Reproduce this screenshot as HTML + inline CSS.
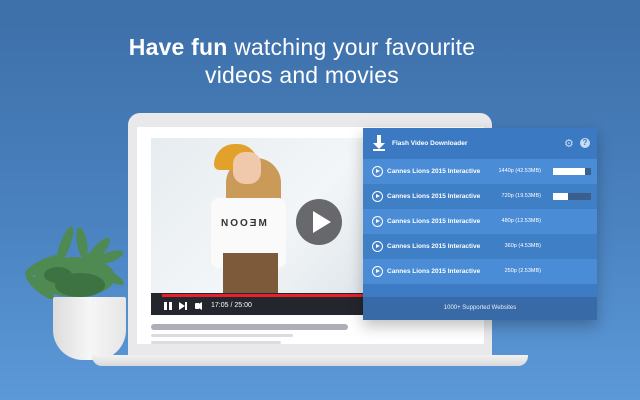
<!DOCTYPE html>
<html><head><style>
*{margin:0;padding:0;box-sizing:border-box}
body{width:640px;height:400px;overflow:hidden;position:relative;font-family:"Liberation Sans",sans-serif;background:linear-gradient(180deg,#3d6fa8 0%,#4a82c0 55%,#5c99d8 100%)}
.abs{position:absolute}
h1{position:absolute;left:0;top:33px;width:604px;text-align:center;color:#fff;font-weight:normal;font-size:23px;line-height:28px;letter-spacing:0.2px}
h1 b{font-weight:bold}
.row{position:absolute;left:0;width:234px;height:25px;color:#fff;font-size:6.5px;font-weight:bold}
.row .t{position:absolute;left:24px;top:9px}
.row .q{position:absolute;left:120px;width:58px;text-align:right;top:9px;font-weight:normal;font-size:5.5px}
.row .ic{position:absolute;left:9px;top:7px;width:11px;height:11px;border:1.5px solid #fff;border-radius:50%}
.row .ic:after{content:"";position:absolute;left:3px;top:1.5px;border-left:4px solid #fff;border-top:2.5px solid transparent;border-bottom:2.5px solid transparent}
.bar{position:absolute;left:190px;top:9px;width:38px;height:7px;background:#3a5f8e}
.bar i{position:absolute;left:0;top:0;height:7px;background:#fff;border:1px solid #fff}
</style></head><body>
<h1><b>Have fun</b> watching your favourite<br>videos and movies</h1>

<!-- plant -->
<svg class="abs" style="left:10px;top:215px" width="120" height="90" viewBox="0 0 120 90">
<g fill="#4f8a52">
<ellipse cx="65" cy="62" rx="40" ry="20"/>
<ellipse cx="35" cy="50" rx="22" ry="6" transform="rotate(-25 35 50)"/>
<ellipse cx="85" cy="40" rx="22" ry="6" transform="rotate(-50 85 40)"/>
<ellipse cx="55" cy="30" rx="20" ry="5" transform="rotate(-70 55 30)"/>
<ellipse cx="30" cy="72" rx="18" ry="5" transform="rotate(40 30 72)"/>
<ellipse cx="98" cy="60" rx="18" ry="5" transform="rotate(30 98 60)"/>
<ellipse cx="72" cy="28" rx="16" ry="5" transform="rotate(-100 72 28)"/>
<ellipse cx="100" cy="42" rx="14" ry="5" transform="rotate(-20 100 42)"/>
</g>
<g fill="#3d7242"><ellipse cx="70" cy="70" rx="25" ry="12"/><ellipse cx="48" cy="60" rx="14" ry="8"/></g>
</svg>
<div class="abs" style="left:53px;top:297px;width:73px;height:63px;background:linear-gradient(90deg,#dcdcdc,#f6f6f6 50%,#e6e6e6);border-radius:2px 2px 30px 30px"></div>

<!-- laptop -->
<div class="abs" style="left:128px;top:113px;width:364px;height:245px;background:#e9e9ec;border-radius:12px 12px 0 0"></div>
<div class="abs" style="left:137px;top:127px;width:347px;height:217px;background:#fff"></div>
<div class="abs" style="left:92px;top:355px;width:436px;height:11px;background:linear-gradient(180deg,#f2f2f2,#d9d9dc);border-radius:0 0 10px 10px"></div>

<!-- video -->
<div class="abs" style="left:151px;top:138px;width:213px;height:156px;background:linear-gradient(135deg,#e6ecf0,#f3f6f8 60%,#dfe6eb);overflow:hidden">
<div class="abs" style="left:75px;top:20px;width:55px;height:100px;background:#c99a58;border-radius:25px 25px 10px 10px"></div>
<div class="abs" style="left:63px;top:6px;width:44px;height:26px;background:#e2a12a;border-radius:22px 22px 6px 6px"></div>
<div class="abs" style="left:82px;top:14px;width:28px;height:32px;background:#f0c9ad;border-radius:12px"></div>
<div class="abs" style="left:60px;top:60px;width:75px;height:70px;background:#fafafa;border-radius:8px"></div>
<div class="abs" style="left:70px;top:80px;font-size:10px;color:#333;letter-spacing:2px;font-weight:bold">NOOƎM</div>
<div class="abs" style="left:72px;top:115px;width:55px;height:41px;background:#7d5b3a"></div>
</div>
<div class="abs" style="left:296px;top:199px;width:46px;height:46px;border-radius:50%;background:rgba(80,80,84,.85)"></div>
<div class="abs" style="left:313px;top:211px;border-left:18px solid #fff;border-top:11px solid transparent;border-bottom:11px solid transparent"></div>
<div class="abs" style="left:151px;top:293px;width:213px;height:22px;background:#24262e"></div>
<div class="abs" style="left:162px;top:294px;width:202px;height:3px;background:#e8202a"></div>
<div class="abs" style="left:164px;top:302px;width:3px;height:8px;background:#fff"></div>
<div class="abs" style="left:169px;top:302px;width:3px;height:8px;background:#fff"></div>
<div class="abs" style="left:179px;top:302px;border-left:6px solid #fff;border-top:4px solid transparent;border-bottom:4px solid transparent"></div>
<div class="abs" style="left:185px;top:302px;width:2px;height:8px;background:#fff"></div>
<div class="abs" style="left:195px;top:303px;width:4px;height:6px;background:#fff;border-radius:1px 0 0 1px"></div>
<div class="abs" style="left:198px;top:302px;width:4px;height:8px;background:#fff;clip-path:polygon(0 30%,100% 0,100% 100%,0 70%)"></div>
<div class="abs" style="left:211px;top:302px;color:#fff;font-size:7px">17:05 / 25:00</div>
<div class="abs" style="left:151px;top:324px;width:197px;height:6px;background:#aeadb8;border-radius:3px"></div>
<div class="abs" style="left:151px;top:334px;width:142px;height:3px;background:#dcdce0;border-radius:2px"></div>
<div class="abs" style="left:151px;top:341px;width:130px;height:3px;background:#dcdce0;border-radius:2px"></div>

<!-- panel -->
<div class="abs" style="left:363px;top:128px;width:234px;height:192px;background:#3d7cc4;box-shadow:0 6px 14px rgba(0,0,0,.25)">
<div class="abs" style="left:0;top:0;width:234px;height:31px;background:#3b7ac2"></div>
<svg class="abs" style="left:9px;top:7px" width="14" height="16" viewBox="0 0 14 16"><path d="M5 0h4v8h4l-6 6-6-6h4z" fill="#fff"/><rect x="1" y="14" width="12" height="2" fill="#fff"/></svg>
<div class="abs" style="left:29px;top:12px;color:#fff;font-size:6.5px;font-weight:bold">Flash Video Downloader</div>
<div class="abs" style="left:201px;top:9px;color:#c6dcf3;font-size:11px">⚙</div>
<div class="abs" style="left:217px;top:10px;width:10px;height:10px;border-radius:50%;background:#c6dcf3;color:#3b7ac2;font-size:8px;font-weight:bold;text-align:center;line-height:10px">?</div>
<div class="row" style="top:31px;background:#4a8dd6"><span class="ic"></span><span class="t">Cannes Lions 2015 Interactive</span><span class="q">1440p (42.53MB)</span><span class="bar"><i style="width:32px"></i></span></div>
<div class="row" style="top:56px;background:#3e7fc6"><span class="ic"></span><span class="t">Cannes Lions 2015 Interactive</span><span class="q">720p (19.53MB)</span><span class="bar"><i style="width:15px"></i></span></div>
<div class="row" style="top:81px;background:#4a8dd6"><span class="ic"></span><span class="t">Cannes Lions 2015 Interactive</span><span class="q">480p (12.53MB)</span></div>
<div class="row" style="top:106px;background:#3e7fc6"><span class="ic"></span><span class="t">Cannes Lions 2015 Interactive</span><span class="q">360p (4.53MB)</span></div>
<div class="row" style="top:131px;background:#4a8dd6"><span class="ic"></span><span class="t">Cannes Lions 2015 Interactive</span><span class="q">250p (2.53MB)</span></div>
<div class="abs" style="left:0;top:169px;width:234px;height:23px;background:#376aa6;color:#e6eef8;font-size:6px;text-align:center;line-height:23px">1000+ Supported Websites</div>
</div>
</body></html>
